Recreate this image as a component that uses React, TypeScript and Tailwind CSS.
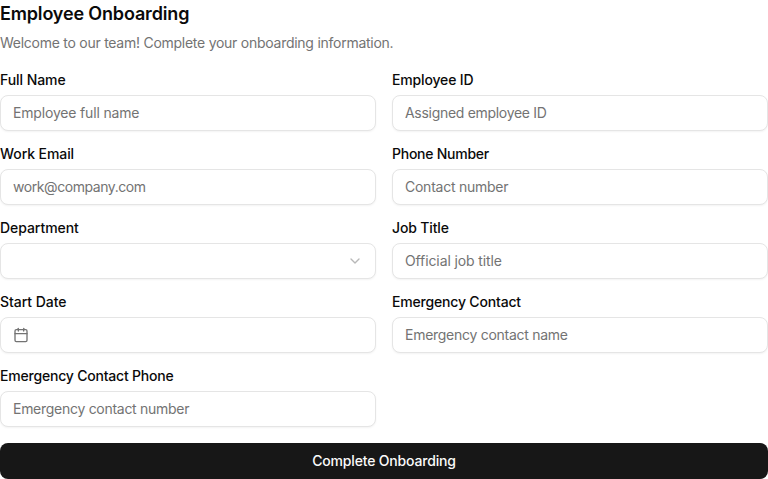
import type { ReactNode } from "react";
import { Calendar, ChevronDown } from "lucide-react";

const control =
  "flex h-9 w-full items-center rounded-lg border border-[#e5e5e5] bg-white px-3 text-sm text-[#737373] shadow-xs outline-none placeholder:text-[#737373]";

type FieldProps = { label: string; tracking: string; children: ReactNode };

function Field({ label, tracking, children }: FieldProps) {
  return (
    <div className="flex flex-col gap-2">
      <label className={"text-sm leading-[14px] font-medium text-[#0a0a0a] " + tracking}>{label}</label>
      {children}
    </div>
  );
}

type TextFieldProps = { label: string; hint: string; tracking: string; hintTracking: string };

function TextField({ label, hint, tracking, hintTracking }: TextFieldProps) {
  return (
    <Field label={label} tracking={tracking}>
      <input className={control + " pb-[2px] " + hintTracking} placeholder={hint} />
    </Field>
  );
}

export default function App() {
  return (
    <form className="w-full bg-white font-['Inter',sans-serif] text-[#0a0a0a]">
      <h2 className="h-7 text-lg leading-7 font-semibold tracking-[-0.16px]">Employee Onboarding</h2>
      <p className="mt-[5px] text-sm leading-5 tracking-[-0.26px] text-[#737373]">
        Welcome to our team! Complete your onboarding information.
      </p>
      <div className="mt-5 grid grid-cols-2 gap-4">
        <TextField label="Full Name" tracking="tracking-[-0.06px]" hint="Employee full name" hintTracking="tracking-[-0.17px]" />
        <TextField label="Employee ID" tracking="tracking-[-0.16px]" hint="Assigned employee ID" hintTracking="tracking-[-0.3px]" />
        <TextField label="Work Email" tracking="tracking-[-0.08px]" hint="work@company.com" hintTracking="tracking-[-0.43px]" />
        <TextField label="Phone Number" tracking="tracking-[-0.25px]" hint="Contact number" hintTracking="tracking-[-0.25px]" />
        <Field label="Department" tracking="tracking-[-0.05px]">
          <button type="button" aria-label="Department" className={control + " justify-end"}>
            <ChevronDown size={16} className="opacity-50" />
          </button>
        </Field>
        <TextField label="Job Title" tracking="tracking-[-0.15px]" hint="Official job title" hintTracking="tracking-[-0.11px]" />
        <Field label="Start Date" tracking="tracking-[-0.05px]">
          <button type="button" aria-label="Start Date" className={control}>
            <Calendar size={16} />
          </button>
        </Field>
        <TextField label="Emergency Contact" tracking="tracking-[-0.18px]" hint="Emergency contact name" hintTracking="tracking-[-0.27px]" />
        <TextField label="Emergency Contact Phone" tracking="tracking-[-0.2px]" hint="Emergency contact number" hintTracking="tracking-[-0.28px]" />
      </div>
      <button type="button" className="mt-4 flex h-9 w-full items-center justify-center rounded-lg bg-[#171717] text-sm font-medium tracking-[-0.18px] text-[#fafafa]">
        Complete Onboarding
      </button>
    </form>
  );
}
